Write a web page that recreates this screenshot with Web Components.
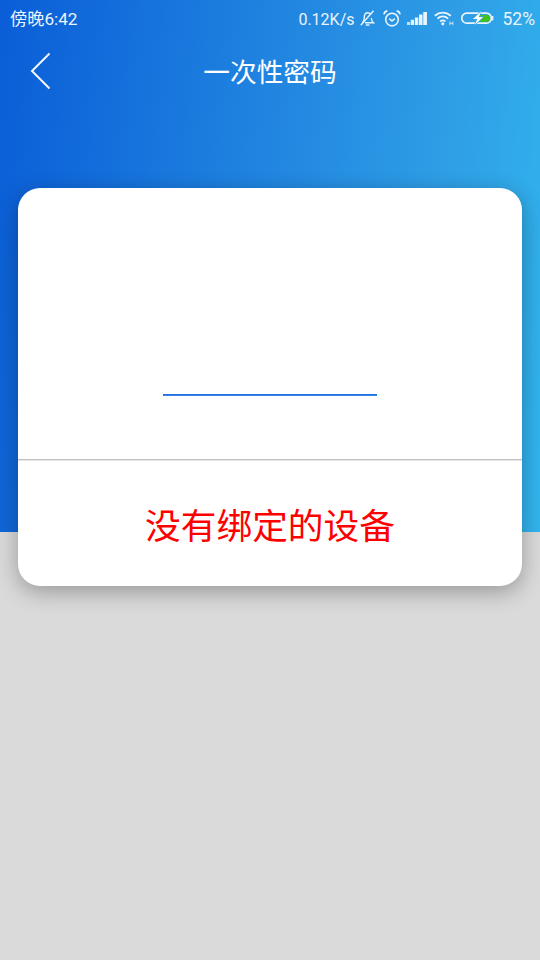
<!DOCTYPE html>
<html lang="zh">
<head>
<meta charset="utf-8">
<title>一次性密码</title>
<style>
  html, body { margin: 0; height: 100%; }
  body { font-family: Roboto, "Noto Sans CJK SC", sans-serif; }
</style>
</head>
<body>
<otp-page>
  <status-bar slot="status"></status-bar>
  <title-bar slot="title">一次性密码</title-bar>
  <otp-card message="没有绑定的设备"></otp-card>
</otp-page>

<script>
// Page frame: gradient on top, grey below
class OtpPage extends HTMLElement {
  constructor() {
    super();
    this.attachShadow({ mode: "open" });
    this.shadowRoot.innerHTML = `
      <style>
        :host {
          display: flex;
          flex-direction: column;
          width: 540px;
          height: 960px;
          overflow: hidden;
          background:
            linear-gradient(97deg, #0a5dd7 0%, #2f9fe6 78%, #31b6ee 100%) top / 100% 532px no-repeat,
            #dadada;
        }
      </style>
      <slot name="status"></slot>
      <slot name="title"></slot>
      <slot></slot>
    `;
  }
}

class StatusBar extends HTMLElement {
  constructor() {
    super();
    this.attachShadow({ mode: "open" });
    this.shadowRoot.innerHTML = `
      <style>
        :host {
          display: flex;
          align-items: center;
          height: 36px;
          padding: 0 5px 0 10px;
          color: #eaf4fd;
          font: 16px Roboto, "Noto Sans CJK SC", sans-serif;
        }
        .time { flex: 1; font-size: 17.2px; padding-bottom: 1px; }
        .right { display: flex; align-items: center; }
        svg { display: block; fill: none; stroke: currentColor; }
        .speed { margin-right: 5px; padding-top: 2px; }
        .alarm { margin: 0 6px 0 8px; }
        .wifi { margin: 0 7px; }
        .pct { margin-left: 9px; font-size: 17.5px; padding-top: 2px; }
      </style>
      <span class="time">傍晚6:42</span>
      <div class="right">
        <span class="speed">0.12K/s</span>
        <svg width="15" height="16" viewBox="0 0 15 16" stroke-width="1.4">
          <path d="M2.500 12.800C4 11.300 4.300 9.800 4.300 7.500 4.300 4.500 5.800 2.700 7.800 2.700c1.500 0 2.600.8 3.100 2.100M11.300 8c.1 2.300.6 3.700 2.200 4.800H5"/>
          <path d="M5.800 15h3.600M.8 15.300 13.500 .8"/>
        </svg>
        <svg class="alarm" width="18" height="17" viewBox="0 0 18 17" stroke-width="1.600">
          <circle cx="9" cy="9.600" r="6.300"/>
          <path d="M6.300 8.600 9 11l2.700-2.400M.9 4.300C1.300 2.500 2.500 1.300 4.300 .9M17.100 4.300C16.700 2.500 15.500 1.300 13.700 .9"/>
        </svg>
        <svg width="20" height="13" viewBox="0 0 20 13" stroke="none" style="fill:currentColor">
          <rect x="0" y="10.500" width="2.400" height="2.500" opacity=".8"/>
          <rect x="4.200" y="8.300" width="2.400" height="4.700"/>
          <rect x="8.400" y="6" width="2.400" height="7"/>
          <rect x="12.600" y="3" width="2.400" height="10"/>
          <rect x="16.800" y="0" width="2.800" height="13"/>
        </svg>
        <svg class="wifi" width="20" height="15" viewBox="0 0 20.500 15" stroke-width="1.900">
          <path d="M.8 4.600C5.800 .4 12.200 .4 17.200 4.600"/>
          <path d="M3.500 7.600C6.800 4.800 11.200 4.800 14.500 7.600"/>
          <path d="M6.300 10.500C8 9.200 10 9.200 11.700 10.500"/>
          <circle cx="9" cy="13" r="1.600" fill="currentColor" stroke="none"/>
          <path d="M16.300 10.500v4M19.300 10.500v4M16.300 12.500h3" stroke-width="1" opacity=".8"/>
        </svg>
        <svg width="33" height="16" viewBox="0 0 33 16">
          <rect x=".8" y="3.200" width="29.600" height="10" rx="5" stroke-width="1.700"/>
          <path d="M31.700 6v4.400" stroke-width="1.300"/>
          <path d="M17 4.900h8.500a3.400 3.400 0 0 1 0 6.800H15z" fill="#43c415" stroke="none"/>
          <path d="M20.500 1 12 9h4.300l-2.600 6 8.400-8h-4.300z" fill="#fff" stroke="#2ba3e7" stroke-width="1.300" paint-order="stroke"/>
        </svg>
        <span class="pct">52%</span>
      </div>
    `;
  }
}

class TitleBar extends HTMLElement {
  constructor() {
    super();
    this.attachShadow({ mode: "open" });
    this.shadowRoot.innerHTML = `
      <style>
        :host {
          display: grid;
          grid-template-columns: 1fr auto 1fr;
          align-items: center;
          height: 68px;
          color: #fff;
          font: 26.700px "Noto Sans CJK SC", sans-serif;
        }
        svg { display: block; margin: 2px 0 0 30px; }
      </style>
      <svg width="22" height="38" viewBox="0 0 22 38" fill="none" stroke="#f4f9fe" stroke-width="2">
        <path d="M19.500 1.500 2 19l17.500 17.500"/>
      </svg>
      <span><slot></slot></span>
    `;
  }
}

class OtpCard extends HTMLElement {
  constructor() {
    super();
    this.attachShadow({ mode: "open" });
    this.shadowRoot.innerHTML = `
      <style>
        :host {
          display: flex;
          flex-direction: column;
          box-sizing: border-box;
          width: 504px;
          height: 398px;
          margin: 84px 18px 0;
          background: #fff;
          border-radius: 22px;
          box-shadow: 0 6px 22px rgba(0, 0, 0, 0.3);
        }
        .code {
          flex: 0 0 272px;
          display: flex;
          justify-content: center;
          align-items: flex-end;
          box-sizing: border-box;
          border-bottom: 1px solid #c0c0c0;
          box-shadow: 0 1px 0 #e6e6e6;
          padding-bottom: 63px;
        }
        .line { width: 214px; height: 2px; background: linear-gradient(#2a7be4, #1469e0 60%, #6ca6ee); }
        .msg {
          flex: 1;
          display: flex;
          justify-content: center;
          align-items: center;
          color: #ff0000;
          font: 35.700px "Noto Sans CJK SC", sans-serif;
        }
      </style>
      <div class="code"><div class="line"></div></div>
      <div class="msg"></div>
    `;
  }

  connectedCallback() {
    this.shadowRoot.querySelector(".msg").textContent = this.getAttribute("message");
  }
}

customElements.define("otp-page", OtpPage);
customElements.define("status-bar", StatusBar);
customElements.define("title-bar", TitleBar);
customElements.define("otp-card", OtpCard);
</script>
</body>
</html>
